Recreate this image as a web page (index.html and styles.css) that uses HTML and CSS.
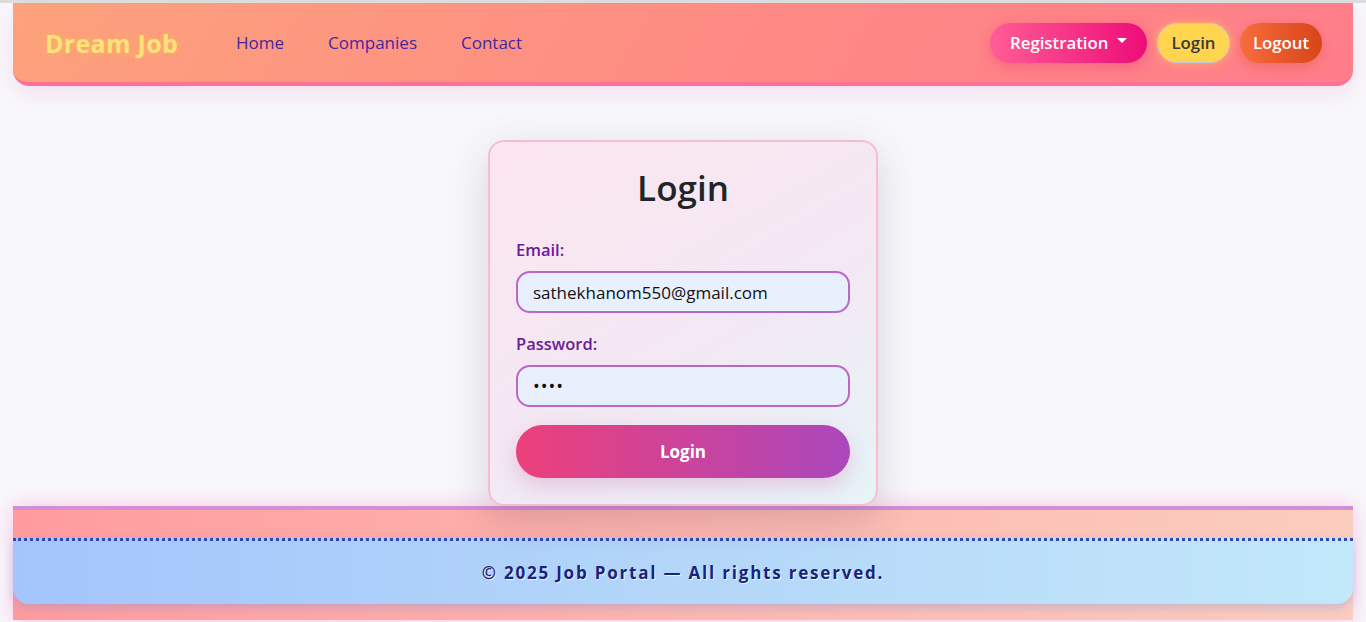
FILE: index.html
```html
<!DOCTYPE html>
<html lang="en">
<head>
<meta charset="utf-8">
<title>Dream Job - Login</title>
<link rel="stylesheet" href="styles.css">
</head>
<body>
<header class="navbar">
  <a class="brand" href="#">Dream Job</a>
  <nav class="nav-links">
    <a href="#">Home</a>
    <a href="#">Companies</a>
    <a href="#">Contact</a>
  </nav>
  <div class="nav-actions">
    <button class="btn btn-reg">Registration <span class="caret"></span></button>
    <button class="btn btn-login">Login</button>
    <button class="btn btn-logout">Logout</button>
  </div>
</header>

<main class="main">
  <form class="card">
    <h2 class="card-title">Login</h2>
    <label class="field-label" for="email">Email:</label>
    <input class="field" id="email" type="email" value="sathekhanom550@gmail.com">
    <label class="field-label" for="pw">Password:</label>
    <input class="field" id="pw" type="password" value="1234">
    <button class="submit" type="button">Login</button>
  </form>
</main>

<footer class="footer">
  <div class="footer-inner">© 2025 Job Portal — All rights reserved.</div>
</footer>
</body>
</html>
```

FILE: styles.css
```css
* { box-sizing: border-box; }

html, body {
  margin: 0;
  padding: 0;
}

body {
  background: #f8f8fc;
  font-family: "Open Sans", "Noto Sans", sans-serif;
  border-top: 3px solid #dcdcdc;
  min-height: 622px;
}

.navbar {
  margin: 0 13px;
  height: 83px;
  display: flex;
  align-items: center;
  padding: 0 31px 0 32px;
  background: linear-gradient(120deg, #fca27c 0%, #fe8a84 55%, #ff7d8b 100%);
  border-bottom: 4px solid #ff6f98;
  border-radius: 0 0 16px 16px;
  box-shadow: 0 8px 24px rgba(236, 150, 200, 0.25);
}

.brand {
  font-size: 25px;
  font-weight: 700;
  color: #ffe27a;
  text-decoration: none;
  text-shadow: 0 0 8px rgba(255, 200, 80, 0.6);
  letter-spacing: 0.3px;
}

.nav-links {
  display: flex;
  gap: 44px;
  margin-left: 58px;
}

.nav-links a {
  color: #4527a0;
  text-decoration: none;
  font-size: 17px;
  font-weight: 500;
}

.nav-actions {
  margin-left: auto;
  display: flex;
  gap: 10px;
  align-items: center;
}

.btn {
  font-family: inherit;
  height: 40px;
  border-radius: 20px;
  border: none;
  font-size: 16.8px;
  font-weight: 600;
  cursor: pointer;
  display: flex;
  align-items: center;
}

.btn-reg {
  width: 157px;
  padding: 0 0 0 20px;
  color: #fff;
  background: linear-gradient(90deg, #ff5d96, #ee0c78);
  box-shadow: 0 4px 14px rgba(240, 40, 120, 0.35);
}

.caret {
  display: inline-block;
  margin-left: 9px;
  border-left: 5px solid transparent;
  border-right: 5px solid transparent;
  border-top: 5px solid #fff;
  position: relative;
  top: -2px;
}

.btn-login {
  width: 73px;
  justify-content: center;
  color: #3a3a3a;
  background: #ffd54f;
  border: 1px solid #c9c9d6;
  box-shadow: 0 0 10px rgba(255, 213, 79, 0.6);
}

.btn-logout {
  width: 82px;
  justify-content: center;
  color: #fff;
  background: linear-gradient(90deg, #f76d3d, #d84418);
  box-shadow: 0 4px 12px rgba(216, 68, 24, 0.3);
}

.main {
  display: flex;
  justify-content: center;
  padding-top: 54px;
}

.card {
  position: relative;
  z-index: 1;
  width: 390px;
  padding: 25px 26px 26px;
  border: 2px solid #f8bbd0;
  border-radius: 16px;
  background: linear-gradient(150deg, #fce6ef 0%, #f3e8f4 55%, #e6f4f8 100%);
  box-shadow: 0 12px 40px rgba(60, 40, 60, 0.18);
  display: flex;
  flex-direction: column;
}

.card-title {
  margin: 0 0 30px;
  text-align: center;
  font-size: 35px;
  font-weight: 600;
  color: #212529;
  line-height: 42px;
}

.field-label {
  color: #6a1b9a;
  font-size: 16.5px;
  font-weight: 600;
  line-height: 22px;
  margin-bottom: 10px;
}

.field {
  font-family: inherit;
  height: 42px;
  border: 2px solid #ba68c8;
  border-radius: 14px;
  background: #e8f0fe;
  padding: 0 15px;
  font-size: 17px;
  color: #111;
  margin-bottom: 20px;
  outline: none;
}

.field[type="password"] {
  letter-spacing: 1px;
  font-size: 18px;
}

.submit {
  font-family: inherit;
  height: 53px;
  margin-top: -2px;
  border: none;
  border-radius: 27px;
  color: #fff;
  font-size: 17px;
  font-weight: 700;
  background: linear-gradient(90deg, #ec407a, #ab47bc);
  box-shadow: 0 8px 20px rgba(200, 80, 150, 0.25);
  cursor: pointer;
}

.footer {
  margin: 0 13px;
  padding: 28px 0 16px;
  border-top: 4px solid #d18fd8;
  background: linear-gradient(90deg, #ff9b9e 0%, #fdb6b0 50%, #fbcdbf 100%);
  box-shadow: 0 0 20px rgba(255, 130, 200, 0.45);
}

.footer-inner {
  height: 66px;
  border-top: 3px dotted #3346b8;
  border-radius: 0 0 16px 16px;
  background: linear-gradient(90deg, #a3c5fc 0%, #b5d8f9 55%, #c2e8fa 100%);
  box-shadow: 0 4px 10px rgba(100, 140, 230, 0.3);
  display: flex;
  align-items: center;
  justify-content: center;
  font-size: 17px;
  font-weight: 700;
  letter-spacing: 1.8px;
  color: #1a237e;
  text-shadow: 1px 1px 1px rgba(255, 255, 255, 0.8);
}
```
